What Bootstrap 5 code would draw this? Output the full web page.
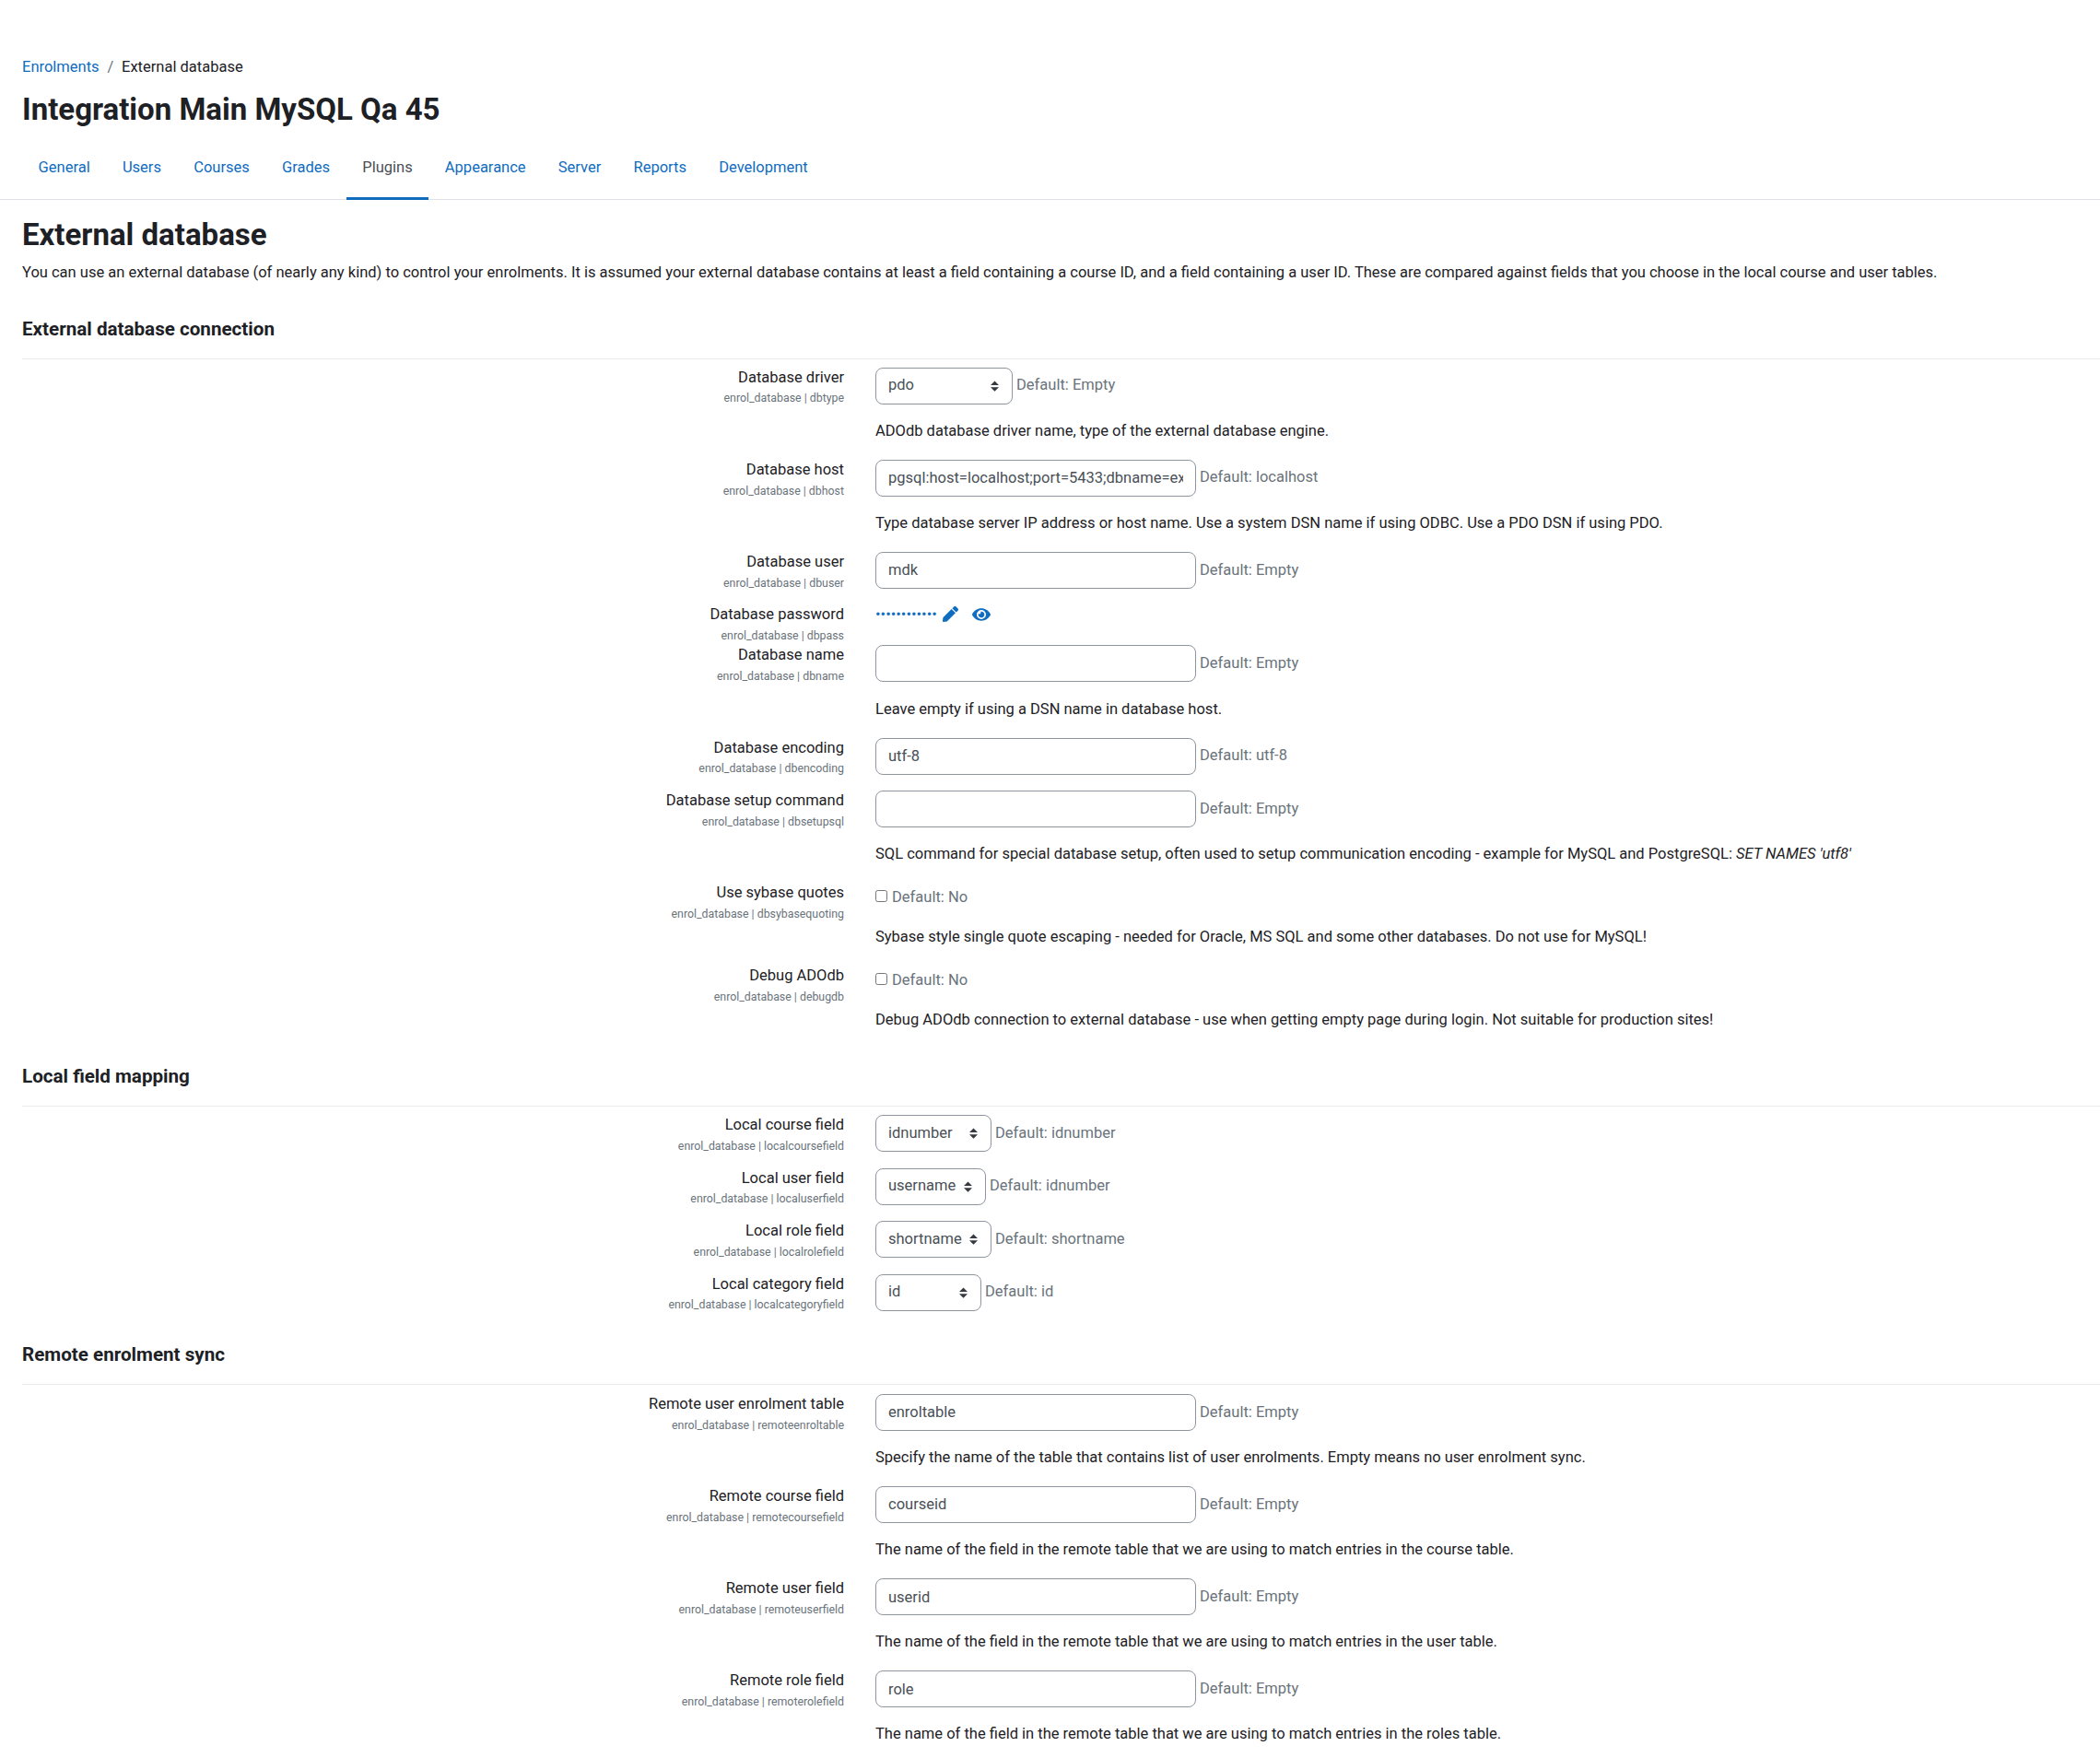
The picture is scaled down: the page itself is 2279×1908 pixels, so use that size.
<!DOCTYPE html>
<html lang="en">
<head>
<meta charset="utf-8">
<title>External database</title>
<link rel="stylesheet" href="https://cdn.jsdelivr.net/npm/bootstrap@5.3.0/dist/css/bootstrap.min.css">
<style>
html,body{background:#fff}
body{font-family:Roboto,"Liberation Sans",sans-serif;font-size:16.5px;line-height:1.5;color:#1d2125;overflow-x:hidden}
a{color:#0f6cbf;text-decoration:none}
.page-top{padding:61px 24px 0}
.crumbs{--bs-breadcrumb-margin-bottom:0;--bs-breadcrumb-divider-color:#6a737b;--bs-breadcrumb-item-active-color:#1d2125;--bs-breadcrumb-item-padding-x:8.8px;font-size:16.5px}
.site-title{font-size:33px;font-weight:700;line-height:40px;margin:13.3px 0 0}
.tabbar{border-bottom:1px solid #dee2e6;padding:0 24px;margin-top:6px}
.tabbar .nav-link{padding:25px 17.6px 19px;color:#0f6cbf;font-size:16.5px;line-height:24.75px;border-bottom:3px solid transparent;margin-bottom:-1px}
.tabbar .nav-link.active{color:#495057;border-bottom-color:#0f6cbf}
.main-area{padding-left:24px}
.page-head{font-size:33px;font-weight:700;line-height:38px;margin:19px 0 10.3px}
.intro{margin:0}
.sect-head{font-size:20.625px;font-weight:700;line-height:24px;margin:0;padding:0 0 20px;border-bottom:1px solid #e9ecef}
.sect{margin-top:35.9px}
.sect.later{margin-top:17.8px}
.sect.last-sect{margin-top:18.2px}
.sect-rows{padding-top:9px}
.last-sect .sect-rows{padding-top:9.6px}
.set-row{margin:0;flex-wrap:nowrap}
.lab-col{flex:0 0 892px;width:892px;padding:0;text-align:right;min-height:44px}
.lab-name{display:block;line-height:24.75px;margin:-1px 0 0}
.lab-key{display:block;font-size:12.35px;line-height:18.6px;margin-top:1px;color:#6a737b}
.ctl-col{flex:1 1 auto;width:auto;padding:0 0 16px 34px}
.ctl-col.bare{padding-bottom:0}
.ctl-line{height:40px;margin-bottom:1.5px}
.ctl-line.short{height:28px;margin:-3.5px 0 0}
.ctl-line.chk{height:30px;margin:0;padding-top:2.6px}
.form-control,.form-select{height:40px;font-size:16.5px;line-height:24.75px;color:#495057;border:1px solid #8f959e;border-radius:8px;padding:0 13px;font-family:inherit}
.form-control{width:348px}
.form-select{padding-right:30px;background-image:url("data:image/svg+xml,%3csvg xmlns='http://www.w3.org/2000/svg' viewBox='0 0 4 5'%3e%3cpath fill='%23343a40' d='M2 0 0 2h4zm0 5L0 3h4z'/%3e%3c/svg%3e");background-size:9px 12px;background-position:right 14.5px center}
.sel-a{width:149px}.sel-b{width:126px}.sel-c{width:120px}.sel-d{width:115px}
.dflt{color:#6a737b;margin-left:4px;white-space:nowrap}
.chk .dflt{margin-left:5px}
.desc{margin:17.1px 0 2.25px;white-space:nowrap}
.chkbox{width:13px;height:13px;margin:0 0 4px;border:1px solid #767676;border-radius:2.5px;flex:none;appearance:auto;background:#fff}
.pass-dots{color:#0f6cbf;letter-spacing:0}
.pass-ico{fill:#0f6cbf;display:block}
.pen-link{margin-left:6px}
.eye-link{margin-left:15px}
.sect:last-child .set-row:last-child .ctl-col{padding-bottom:0}
</style>
</head>
<body>
<header class="page-top">
  <nav aria-label="breadcrumb"><ol class="breadcrumb crumbs">
    <li class="breadcrumb-item"><a href="#">Enrolments</a></li>
    <li class="breadcrumb-item active" aria-current="page">External database</li>
  </ol></nav>
  <h1 class="site-title">Integration Main MySQL Qa 45</h1>
</header>
<ul class="nav tabbar">
  <li class="nav-item"><a class="nav-link" href="#">General</a></li>
  <li class="nav-item"><a class="nav-link" href="#">Users</a></li>
  <li class="nav-item"><a class="nav-link" href="#">Courses</a></li>
  <li class="nav-item"><a class="nav-link" href="#">Grades</a></li>
  <li class="nav-item"><a class="nav-link active" href="#">Plugins</a></li>
  <li class="nav-item"><a class="nav-link" href="#">Appearance</a></li>
  <li class="nav-item"><a class="nav-link" href="#">Server</a></li>
  <li class="nav-item"><a class="nav-link" href="#">Reports</a></li>
  <li class="nav-item"><a class="nav-link" href="#">Development</a></li>
</ul>
<main class="main-area">
  <h2 class="page-head">External database</h2>
  <p class="intro">You can use an external database (of nearly any kind) to control your enrolments. It is assumed your external database contains at least a field containing a course ID, and a field containing a user ID. These are compared against fields that you choose in the local course and user tables.</p>

  <section class="sect">
    <h3 class="sect-head">External database connection</h3>
    <div class="sect-rows">
      <div class="row set-row">
        <div class="lab-col"><label class="lab-name">Database driver</label><span class="lab-key">enrol_database | dbtype</span></div>
        <div class="ctl-col">
          <div class="d-flex align-items-center ctl-line"><select class="form-select sel-a"><option>pdo</option></select><span class="dflt">Default: Empty</span></div>
          <p class="desc">ADOdb database driver name, type of the external database engine.</p>
        </div>
      </div>
      <div class="row set-row">
        <div class="lab-col"><label class="lab-name">Database host</label><span class="lab-key">enrol_database | dbhost</span></div>
        <div class="ctl-col">
          <div class="d-flex align-items-center ctl-line"><input class="form-control" type="text" value="pgsql:host=localhost;port=5433;dbname=external"><span class="dflt">Default: localhost</span></div>
          <p class="desc">Type database server IP address or host name. Use a system DSN name if using ODBC. Use a PDO DSN if using PDO.</p>
        </div>
      </div>
      <div class="row set-row">
        <div class="lab-col"><label class="lab-name">Database user</label><span class="lab-key">enrol_database | dbuser</span></div>
        <div class="ctl-col">
          <div class="d-flex align-items-center ctl-line"><input class="form-control" type="text" value="mdk"><span class="dflt">Default: Empty</span></div>
        </div>
      </div>
      <div class="row set-row">
        <div class="lab-col"><label class="lab-name">Database password</label><span class="lab-key">enrol_database | dbpass</span></div>
        <div class="ctl-col bare">
          <div class="d-flex align-items-center ctl-line short">
            <span class="pass-dots">••••••••••••</span>
            <a href="#" class="pen-link"><svg class="pass-ico" width="17" height="17" viewBox="0 0 512 512"><path d="M290.74 93.24l128.02 128.02-277.99 277.99-114.14 12.6C11.35 513.54-1.56 500.62.14 485.34l12.7-114.22 277.9-277.88zm207.2-19.06l-60.11-60.11c-18.75-18.75-49.16-18.75-67.91 0l-56.55 56.55 128.02 128.02 56.55-56.55c18.75-18.76 18.75-49.16 0-67.91z"/></svg></a>
            <a href="#" class="eye-link"><svg class="pass-ico" width="20" height="18" viewBox="0 0 576 512"><path d="M572.52 241.4C518.29 135.59 410.93 64 288 64S57.68 135.64 3.48 241.41a32.35 32.35 0 0 0 0 29.19C57.71 376.41 165.07 448 288 448s230.32-71.64 284.52-177.41a32.35 32.35 0 0 0 0-29.19zM288 400a144 144 0 1 1 144-144 143.93 143.93 0 0 1-144 144zm0-240a95.31 95.31 0 0 0-25.31 3.79 47.85 47.85 0 0 1-66.9 66.9A95.78 95.78 0 1 0 288 160z"/></svg></a>
          </div>
        </div>
      </div>
      <div class="row set-row">
        <div class="lab-col"><label class="lab-name">Database name</label><span class="lab-key">enrol_database | dbname</span></div>
        <div class="ctl-col">
          <div class="d-flex align-items-center ctl-line"><input class="form-control" type="text"><span class="dflt">Default: Empty</span></div>
          <p class="desc">Leave empty if using a DSN name in database host.</p>
        </div>
      </div>
      <div class="row set-row">
        <div class="lab-col"><label class="lab-name">Database encoding</label><span class="lab-key">enrol_database | dbencoding</span></div>
        <div class="ctl-col">
          <div class="d-flex align-items-center ctl-line"><input class="form-control" type="text" value="utf-8"><span class="dflt">Default: utf-8</span></div>
        </div>
      </div>
      <div class="row set-row">
        <div class="lab-col"><label class="lab-name">Database setup command</label><span class="lab-key">enrol_database | dbsetupsql</span></div>
        <div class="ctl-col">
          <div class="d-flex align-items-center ctl-line"><input class="form-control" type="text"><span class="dflt">Default: Empty</span></div>
          <p class="desc">SQL command for special database setup, often used to setup communication encoding - example for MySQL and PostgreSQL: <em>SET NAMES 'utf8'</em></p>
        </div>
      </div>
      <div class="row set-row">
        <div class="lab-col"><label class="lab-name">Use sybase quotes</label><span class="lab-key">enrol_database | dbsybasequoting</span></div>
        <div class="ctl-col">
          <div class="d-flex align-items-center ctl-line chk"><input class="chkbox" type="checkbox"><span class="dflt">Default: No</span></div>
          <p class="desc">Sybase style single quote escaping - needed for Oracle, MS SQL and some other databases. Do not use for MySQL!</p>
        </div>
      </div>
      <div class="row set-row">
        <div class="lab-col"><label class="lab-name">Debug ADOdb</label><span class="lab-key">enrol_database | debugdb</span></div>
        <div class="ctl-col">
          <div class="d-flex align-items-center ctl-line chk"><input class="chkbox" type="checkbox"><span class="dflt">Default: No</span></div>
          <p class="desc">Debug ADOdb connection to external database - use when getting empty page during login. Not suitable for production sites!</p>
        </div>
      </div>
    </div>
  </section>

  <section class="sect later">
    <h3 class="sect-head">Local field mapping</h3>
    <div class="sect-rows">
      <div class="row set-row">
        <div class="lab-col"><label class="lab-name">Local course field</label><span class="lab-key">enrol_database | localcoursefield</span></div>
        <div class="ctl-col"><div class="d-flex align-items-center ctl-line"><select class="form-select sel-b"><option>idnumber</option></select><span class="dflt">Default: idnumber</span></div></div>
      </div>
      <div class="row set-row">
        <div class="lab-col"><label class="lab-name">Local user field</label><span class="lab-key">enrol_database | localuserfield</span></div>
        <div class="ctl-col"><div class="d-flex align-items-center ctl-line"><select class="form-select sel-c"><option>username</option></select><span class="dflt">Default: idnumber</span></div></div>
      </div>
      <div class="row set-row">
        <div class="lab-col"><label class="lab-name">Local role field</label><span class="lab-key">enrol_database | localrolefield</span></div>
        <div class="ctl-col"><div class="d-flex align-items-center ctl-line"><select class="form-select sel-b"><option>shortname</option></select><span class="dflt">Default: shortname</span></div></div>
      </div>
      <div class="row set-row">
        <div class="lab-col"><label class="lab-name">Local category field</label><span class="lab-key">enrol_database | localcategoryfield</span></div>
        <div class="ctl-col"><div class="d-flex align-items-center ctl-line"><select class="form-select sel-d"><option>id</option></select><span class="dflt">Default: id</span></div></div>
      </div>
    </div>
  </section>

  <section class="sect last-sect">
    <h3 class="sect-head">Remote enrolment sync</h3>
    <div class="sect-rows">
      <div class="row set-row">
        <div class="lab-col"><label class="lab-name">Remote user enrolment table</label><span class="lab-key">enrol_database | remoteenroltable</span></div>
        <div class="ctl-col">
          <div class="d-flex align-items-center ctl-line"><input class="form-control" type="text" value="enroltable"><span class="dflt">Default: Empty</span></div>
          <p class="desc">Specify the name of the table that contains list of user enrolments. Empty means no user enrolment sync.</p>
        </div>
      </div>
      <div class="row set-row">
        <div class="lab-col"><label class="lab-name">Remote course field</label><span class="lab-key">enrol_database | remotecoursefield</span></div>
        <div class="ctl-col">
          <div class="d-flex align-items-center ctl-line"><input class="form-control" type="text" value="courseid"><span class="dflt">Default: Empty</span></div>
          <p class="desc">The name of the field in the remote table that we are using to match entries in the course table.</p>
        </div>
      </div>
      <div class="row set-row">
        <div class="lab-col"><label class="lab-name">Remote user field</label><span class="lab-key">enrol_database | remoteuserfield</span></div>
        <div class="ctl-col">
          <div class="d-flex align-items-center ctl-line"><input class="form-control" type="text" value="userid"><span class="dflt">Default: Empty</span></div>
          <p class="desc">The name of the field in the remote table that we are using to match entries in the user table.</p>
        </div>
      </div>
      <div class="row set-row">
        <div class="lab-col"><label class="lab-name">Remote role field</label><span class="lab-key">enrol_database | remoterolefield</span></div>
        <div class="ctl-col">
          <div class="d-flex align-items-center ctl-line"><input class="form-control" type="text" value="role"><span class="dflt">Default: Empty</span></div>
          <p class="desc">The name of the field in the remote table that we are using to match entries in the roles table.</p>
        </div>
      </div>
    </div>
  </section>
</main>
</body>
</html>
